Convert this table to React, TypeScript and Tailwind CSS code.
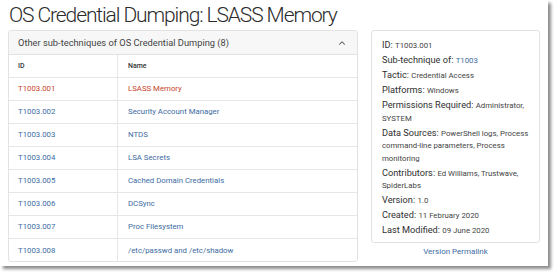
import { ChevronUp } from "lucide-react";

const rows = [
  { id: "T1003.001", name: "LSASS Memory", active: true },
  { id: "T1003.002", name: "Security Account Manager" },
  { id: "T1003.003", name: "NTDS" },
  { id: "T1003.004", name: "LSA Secrets" },
  { id: "T1003.005", name: "Cached Domain Credentials" },
  { id: "T1003.006", name: "DCSync" },
  { id: "T1003.007", name: "Proc Filesystem" },
  { id: "T1003.008", name: "/etc/passwd and /etc/shadow" },
];

function Field({ label, children }: { label: string; children: React.ReactNode }) {
  return (
    <div className="text-[9.2px] leading-[12.5px] text-[#2f2f2f]">
      <span>{label}: </span>
      <span className="text-[7.8px] leading-none text-[#444]">{children}</span>
    </div>
  );
}

export default function App() {
  return (
    <div className="w-[554px] h-[273px] bg-white" style={{ fontFamily: "Roboto, 'Liberation Sans', sans-serif" }}>
      <div className="w-[548px] h-[266px] bg-white shadow-[3px_3px_3px_rgba(0,0,0,0.45)] px-[8px]">
        <h1 className="text-[21px] leading-[30px] font-light tracking-[-1.1px] text-[#2b2b2b] pl-[1px]">
          OS Credential Dumping: LSASS Memory
        </h1>
        <div className="flex gap-[13px]">
          {/* sub-techniques table */}
          <div className="w-[352px] h-[232px] border border-[#e2e2e2] rounded-[3px] overflow-hidden">
            <div className="h-[24px] bg-[#f7f7f7] border-b border-[#e2e2e2] flex items-center justify-between pl-[9px] pr-[10px]">
              <span className="text-[9.3px] text-[#444]">Other sub-techniques of OS Credential Dumping (8)</span>
              <ChevronUp size={10} strokeWidth={2.5} className="text-[#555]" />
            </div>
            <div className="flex h-[23px] items-center border-b border-[#e6e6e6] text-[7px] font-medium text-[#333]">
              <div className="w-[109px] pl-[9px] h-full flex items-center border-r border-[#e6e6e6]">ID</div>
              <div className="pl-[10px]">Name</div>
            </div>
            {rows.map((r, i) => (
              <div
                key={r.id}
                className={`flex h-[23px] items-center text-[7.8px] ${i < rows.length - 1 ? "border-b border-[#e6e6e6]" : ""} ${r.active ? "text-[#c8452b]" : "text-[#3d6ca3]"}`}
              >
                <div className="w-[109px] pl-[9px] h-full flex items-center border-r border-[#e6e6e6]">{r.id}</div>
                <div className="pl-[10px]">{r.name}</div>
              </div>
            ))}
          </div>
          {/* info card */}
          <div className="w-[170px] flex flex-col">
            <div className="h-[213px] border border-[#e2e2e2] rounded-[3px] pl-[10px] pr-[5px] pt-[8px] flex flex-col gap-[2.5px]">
              <Field label="ID">T1003.001</Field>
              <Field label="Sub-technique of">
                {" "}<span className="text-[#3d6ca3]">T1003</span>
              </Field>
              <Field label="Tactic">Credential Access</Field>
              <Field label="Platforms">Windows</Field>
              <Field label="Permissions Required">Administrator, SYSTEM</Field>
              <Field label="Data Sources">PowerShell logs, Process command-line parameters, Process monitoring</Field>
              <Field label="Contributors">Ed Williams, Trustwave, SpiderLabs</Field>
              <Field label="Version">1.0</Field>
              <Field label="Created">11 February 2020</Field>
              <Field label="Last Modified">09 June 2020</Field>
            </div>
            <div className="text-center text-[8px] leading-[12px] text-[#3d6ca3] mt-[3px]">Version Permalink</div>
          </div>
        </div>
      </div>
    </div>
  );
}
